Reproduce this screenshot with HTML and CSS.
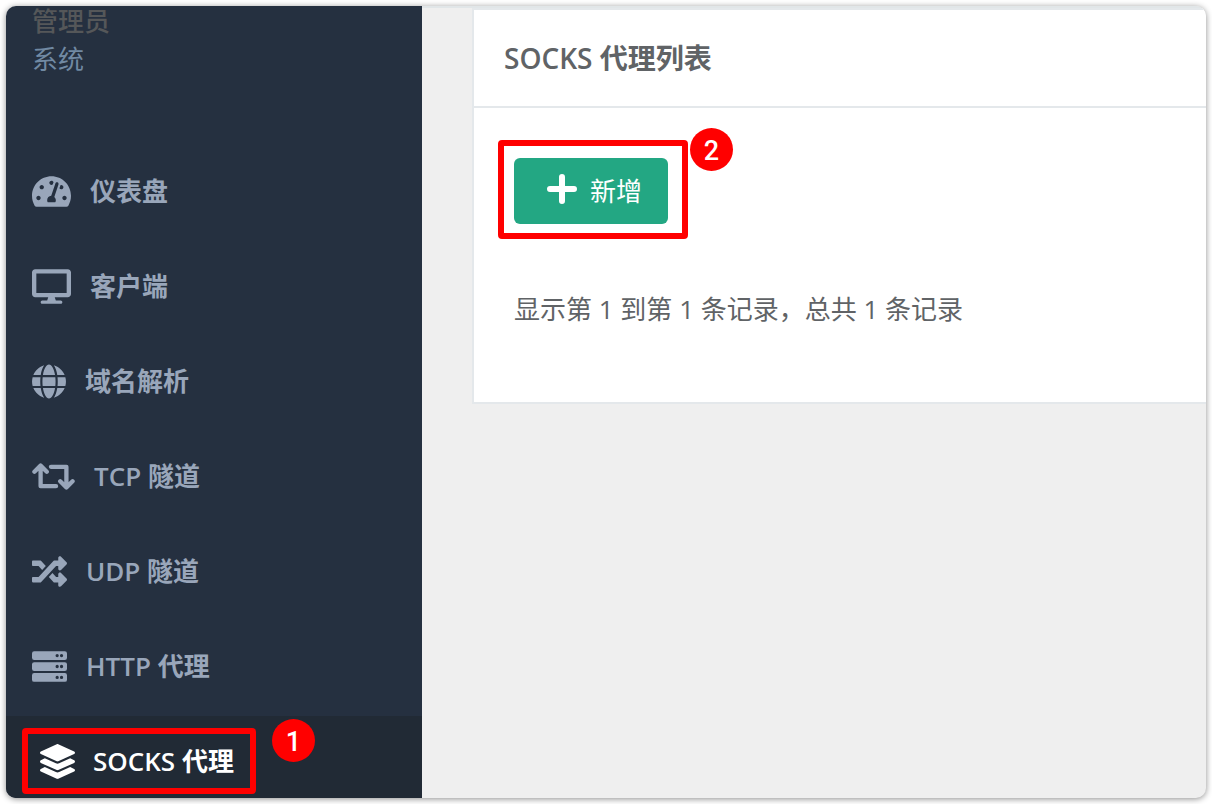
FILE: index.html
```html
<!DOCTYPE html>
<html lang="zh-CN">
<head>
<meta charset="utf-8">
<meta name="viewport" content="width=device-width, initial-scale=1">
<title>SOCKS 代理列表</title>
<link rel="stylesheet" href="styles.css">
</head>
<body>
<div class="window">
  <aside class="sidebar">
    <div class="profile">
      <strong class="profile-name">管理员</strong>
      <span class="profile-role">系统</span>
    </div>
    <nav class="nav">
      <a class="nav-link" href="#">
        <svg class="icon icon-wide" viewBox="0 0 576 512" aria-hidden="true"><path d="M288 32C128.94 32 0 160.94 0 320c0 52.8 14.25 102.26 39.06 144.8 5.61 9.62 16.3 15.2 27.44 15.2h443c11.14 0 21.83-5.58 27.44-15.2C561.75 422.26 576 372.8 576 320c0-159.06-128.94-288-288-288zm0 64c14.71 0 26.58 10.13 30.32 23.65-1.11 2.26-2.64 4.23-3.45 6.67l-9.22 27.67c-5.13 3.49-10.97 6.01-17.64 6.01-17.67 0-32-14.33-32-32S270.33 96 288 96zM96 384c-17.67 0-32-14.33-32-32s14.33-32 32-32 32 14.33 32 32-14.33 32-32 32zm48-160c-17.67 0-32-14.33-32-32s14.33-32 32-32 32 14.33 32 32-14.33 32-32 32zm246.77-72.41l-61.33 184C343.13 347.33 352 364.54 352 384c0 11.72-3.38 22.55-8.88 32H232.88c-5.5-9.45-8.88-20.28-8.88-32 0-33.94 26.5-61.43 59.9-63.59l61.34-184.01c4.17-12.56 17.73-19.45 30.36-15.17 12.57 4.19 19.35 17.79 15.17 30.36zm14.66 57.2l15.52-46.55c3.47-1.29 7.13-2.23 11.05-2.23 17.67 0 32 14.33 32 32s-14.33 32-32 32c-11.38-.01-20.89-6.28-26.57-15.22zM480 384c-17.67 0-32-14.33-32-32s14.33-32 32-32 32 14.33 32 32-14.33 32-32 32z"/></svg>
        <span>仪表盘</span>
      </a>
      <a class="nav-link" href="#">
        <svg class="icon icon-wide" viewBox="0 0 576 512" aria-hidden="true"><path d="M528 0H48C21.5 0 0 21.5 0 48v320c0 26.5 21.5 48 48 48h192l-16 48h-72c-13.3 0-24 10.7-24 24s10.7 24 24 24h272c13.3 0 24-10.7 24-24s-10.7-24-24-24h-72l-16-48h192c26.5 0 48-21.5 48-48V48c0-26.5-21.5-48-48-48zm-16 352H64V64h448v288z"/></svg>
        <span>客户端</span>
      </a>
      <a class="nav-link" href="#">
        <svg class="icon icon-round" viewBox="0 0 496 512" aria-hidden="true"><path d="M336.5 160C322 70.7 287.8 8 248 8s-74 62.7-88.5 152h177zM152 256c0 22.2 1.2 43.5 3.3 64h185.3c2.1-20.5 3.3-41.8 3.3-64s-1.2-43.5-3.3-64H155.3c-2.1 20.5-3.3 41.8-3.3 64zm324.7-96c-28.6-67.9-86.5-120.4-158-141.6 24.4 33.8 41.2 84.7 50 141.6h108zM177.2 18.4C105.8 39.6 47.8 92.1 19.3 160h108c8.7-56.9 25.5-107.8 49.9-141.6zM487.4 192H372.7c2.1 21 3.3 42.5 3.3 64s-1.2 43-3.3 64h114.6c5.5-20.5 8.6-41.8 8.6-64s-3.1-43.5-8.5-64zM120 256c0-21.5 1.2-43 3.3-64H8.6C3.2 212.5 0 233.8 0 256s3.2 43.5 8.6 64h114.6c-2-21-3.2-42.5-3.2-64zm39.5 96c14.5 89.3 48.7 152 88.5 152s74-62.7 88.5-152h-177zm159.3 141.6c71.4-21.2 129.4-73.7 158-141.6h-108c-8.8 56.9-25.6 107.8-50 141.6zM19.3 352c28.6 67.9 86.5 120.4 158 141.6-24.4-33.8-41.2-84.7-50-141.6h-108z"/></svg>
        <span>域名解析</span>
      </a>
      <a class="nav-link" href="#">
        <svg class="icon icon-extra" viewBox="0 0 640 512" aria-hidden="true"><g fill="none" stroke="currentColor" stroke-width="64" stroke-linejoin="round" stroke-linecap="round"><path d="M36 186l92-92 92 92M128 100v300h230"/><path d="M604 326l-92 92-92-92M512 412V112H282"/></g></svg>
        <span>TCP 隧道</span>
      </a>
      <a class="nav-link" href="#">
        <svg class="icon" viewBox="0 0 512 512" aria-hidden="true"><path d="M504.971 359.029c9.373 9.373 9.373 24.569 0 33.941l-80 79.984c-15.01 15.01-40.971 4.49-40.971-16.971V416h-58.785a12.004 12.004 0 0 1-8.773-3.812l-70.556-75.596 53.333-57.143L352 336h32v-39.981c0-21.438 25.943-31.998 40.971-16.971l80 79.981zM12 176h84l52.781 56.551 53.333-57.143-70.556-75.596A11.999 11.999 0 0 0 122.785 96H12c-6.627 0-12 5.373-12 12v56c0 6.627 5.373 12 12 12zm372 0v39.984c0 21.46 25.961 31.98 40.971 16.971l80-79.984c9.373-9.373 9.373-24.569 0-33.941l-80-79.981C409.943 24.021 384 34.582 384 56.019V96h-58.785a12.004 12.004 0 0 0-8.773 3.812L96 336H12c-6.627 0-12 5.373-12 12v56c0 6.627 5.373 12 12 12h110.785c3.326 0 6.503-1.381 8.773-3.812L352 176h32z"/></svg>
        <span>UDP 隧道</span>
      </a>
      <a class="nav-link" href="#">
        <svg class="icon" viewBox="0 0 512 512" aria-hidden="true"><path fill-rule="evenodd" d="M32 32h448a32 32 0 0 1 32 32v64a32 32 0 0 1-32 32H32a32 32 0 0 1-32-32V64a32 32 0 0 1 32-32zM432 72a24 24 0 1 0 0 48a24 24 0 1 0 0-48zM368 72a24 24 0 1 0 0 48a24 24 0 1 0 0-48zM32 192h448a32 32 0 0 1 32 32v64a32 32 0 0 1-32 32H32a32 32 0 0 1-32-32v-64a32 32 0 0 1 32-32zM432 232a24 24 0 1 0 0 48a24 24 0 1 0 0-48zM368 232a24 24 0 1 0 0 48a24 24 0 1 0 0-48zM32 352h448a32 32 0 0 1 32 32v64a32 32 0 0 1-32 32H32a32 32 0 0 1-32-32v-64a32 32 0 0 1 32-32zM432 392a24 24 0 1 0 0 48a24 24 0 1 0 0-48zM368 392a24 24 0 1 0 0 48a24 24 0 1 0 0-48z"/></svg>
        <span>HTTP 代理</span>
      </a>
      <a class="nav-link nav-link-active" href="#" aria-current="page">
        <svg class="icon" viewBox="0 0 512 512" aria-hidden="true"><path d="M12.41 148.02l232.94 105.67c6.8 3.09 14.49 3.09 21.29 0l232.94-105.67c16.55-7.51 16.55-32.52 0-40.03L266.65 2.31a25.607 25.607 0 0 0-21.29 0L12.41 107.98c-16.55 7.51-16.55 32.53 0 40.04zm487.18 88.28l-58.09-26.33-161.64 73.27c-7.56 3.43-15.59 5.17-23.86 5.17s-16.29-1.74-23.86-5.17L70.51 209.97l-58.1 26.33c-16.55 7.5-16.55 32.5 0 40l232.94 105.59c6.8 3.08 14.49 3.08 21.29 0L499.59 276.3c16.55-7.5 16.55-32.5 0-40zm0 127.8l-57.87-26.23-161.86 73.37c-7.56 3.43-15.59 5.17-23.86 5.17s-16.29-1.74-23.86-5.17L70.29 337.87 12.41 364.1c-16.55 7.5-16.55 32.5 0 40l232.94 105.59c6.8 3.08 14.49 3.08 21.29 0L499.59 404.1c16.55-7.5 16.55-32.5 0-40z"/></svg>
        <span>SOCKS 代理</span>
        <span class="marker marker-nav"></span>
        <span class="step step-nav">1</span>
      </a>
    </nav>
  </aside>
  <main class="main">
    <section class="panel">
      <header class="panel-header">
        <h1 class="panel-title">SOCKS 代理列表</h1>
      </header>
      <div class="panel-body">
        <div class="toolbar">
          <button class="btn-add" type="button">
            <svg class="icon-plus" viewBox="0 0 32 36" aria-hidden="true"><path d="M16 4v24M4 16h24"/></svg>
            <span>新增</span>
          </button>
          <span class="marker marker-add"></span>
          <span class="step step-add">2</span>
        </div>
        <p class="summary">显示第 1 到第 1 条记录，总共 1 条记录</p>
      </div>
    </section>
  </main>
</div>
</body>
</html>
```
FILE: styles.css
```css
* {
  box-sizing: border-box;
}

body {
  margin: 0;
  background: #fff;
  color: #606366;
  font-family: "Open Sans", "Noto Sans CJK SC", sans-serif;
  font-size: 26px;
  line-height: 38px;
}

.window {
  display: flex;
  height: calc(100vh - 12px);
  margin: 6px;
  overflow: hidden;
  border-radius: 10px;
  background: #efefef;
  box-shadow: 0 1px 6px rgba(0, 0, 0, 0.45);
}

/* Sidebar */

.sidebar {
  flex: 0 0 416px;
  overflow: hidden;
  background: #253040;
}

.profile {
  display: flex;
  flex-direction: column;
  gap: 8px;
  height: 140px;
  padding: 0 26px;
  line-height: 30px;
}

.profile-name {
  color: #555759;
  font-weight: 500;
}

.profile-role {
  color: #7189a3;
}

.nav {
  display: flex;
  flex-direction: column;
}

.nav-link {
  position: relative;
  display: flex;
  align-items: center;
  gap: 19px;
  height: 95px;
  padding: 0 26px 5px;
  color: #99a6ba;
  font-weight: 600;
  text-decoration: none;
}

.nav-link-active {
  padding-left: 34px;
  gap: 18px;
  background: #212a35;
  color: #fff;
}

.icon {
  flex: none;
  width: 35px;
  height: 35px;
  fill: currentColor;
}

.icon-round {
  width: 34px;
}

.icon-wide {
  width: 39px;
}

.icon-extra {
  width: 43px;
}

/* Main area */

.main {
  flex: 1;
  min-width: 0;
  padding-left: 50px;
  border-top: 2px solid #e1e6e8;
}

.panel {
  border: 2px solid #e4e8eb;
  border-right: 0;
  background: #fff;
}

.panel-header {
  padding: 29px 30px;
  border-bottom: 2px solid #e4e8eb;
}

.panel-title {
  margin: 0;
  font-size: 28px;
  font-weight: 600;
  line-height: 38px;
}

.panel-body {
  padding: 50px 40px 74px;
}

.toolbar {
  position: relative;
  display: inline-block;
  vertical-align: top;
}

.btn-add {
  display: flex;
  align-items: center;
  justify-content: center;
  gap: 12px;
  height: 66px;
  padding: 0 26px 0 32px;
  border: 0;
  border-radius: 6px;
  background: #23a783;
  color: #fff;
  font: inherit;
}

.icon-plus {
  width: 32px;
  height: 36px;
  fill: none;
  stroke: currentColor;
  stroke-width: 6;
  stroke-linecap: round;
}

.summary {
  margin: 66px 0 0;
}

/* Walkthrough markers */

.marker {
  position: absolute;
  border: 6px solid #f00;
  border-radius: 4px;
  pointer-events: none;
}

.marker-nav {
  top: 12px;
  left: 16px;
  width: 234px;
  height: 66px;
}

.marker-add {
  inset: -18px -20px -15px -16px;
}

.step {
  position: absolute;
  width: 43px;
  height: 43px;
  border-radius: 50%;
  background: #f00;
  color: #fff;
  font-family: Roboto, sans-serif;
  font-size: 27px;
  font-weight: 500;
  line-height: 46px;
  text-align: center;
}

.step-nav {
  top: 3px;
  left: 266px;
}

.step-add {
  top: -30px;
  left: 176px;
}
```
